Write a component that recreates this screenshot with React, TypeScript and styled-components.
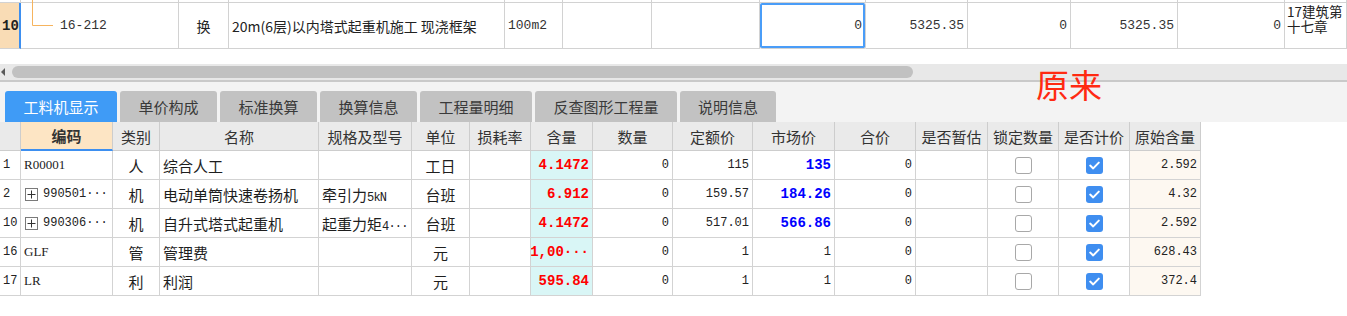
import React from 'react';
import styled, {createGlobalStyle, css} from 'styled-components';

const CJK = '"Noto Sans CJK SC", sans-serif';
const MONO = '"Liberation Mono", "Noto Sans CJK SC", monospace';

const GlobalStyle = createGlobalStyle`
    html, body {
        margin: 0;
        padding: 0;
        background: #fff;
    }
    body {
        font-family: ${CJK};
        color: #222;
    }
`;

const Page = styled.div`
    position: relative;
    width: 1347px;
    height: 316px;
    overflow: hidden;
    background: #fff;
`;

/* ---------- upper grid (quota row) ---------- */

const TopGrid = styled.div`
    display: grid;
    grid-template-columns: 21px 158px 50px 276px 58px 89px 108px 106px 102px 103px 107px 107px 62px;
`;

const StubCell = styled.div`
    height: 3px;
    box-sizing: border-box;
    border-right: 1px solid #d2d2d2;
    border-bottom: 1px solid #d2d2d2;
`;

const TopCell = styled.div<{$align?: 'left' | 'center' | 'right'; $focus?: boolean}>`
    position: relative;
    display: flex;
    align-items: center;
    justify-content: ${p => p.$align === 'right' ? 'flex-end' : p.$align === 'center' ? 'center' : 'flex-start'};
    height: 46px;
    box-sizing: border-box;
    padding: 0 3px;
    border-right: 1px solid #d2d2d2;
    border-bottom: 1px solid #d2d2d2;
    font-size: 14px;
    color: #222;
    white-space: nowrap;
    overflow: hidden;
    ${p => p.$focus && css`
        box-shadow: inset 0 0 0 2px #4a9df8;
        border-radius: 2px;
    `}
`;

const TopRowNo = styled(TopCell)`
    background: #f9dcb5;
    border-right: 2px solid #3d8ff0;
    font-weight: bold;
    font-size: 14px;
    padding: 0 2px;
    font-family: ${MONO};
`;

const TopNote = styled(TopCell)`
    flex-direction: column;
    align-items: flex-start;
    justify-content: flex-start;
    padding: 1px 2px 0;
    font-size: 13.5px;
    line-height: 15px;
`;

const NoteLine = styled.span`
    display: block;
    height: 15px;
`;

const TreeCell = styled(TopCell)`
    padding-left: 39px;
    overflow: visible;
`;

const TreeLine = styled.svg`
    position: absolute;
    left: 10px;
    top: -3px;
`;

const TopNum = styled.span`
    font-family: ${MONO};
    font-size: 13px;
    color: #333;
`;

/* ---------- scrollbar + tabs ---------- */

const ScrollBar = styled.div`
    margin-top: 15px;
    height: 16px;
    background: #e8e8e8;
    border-bottom: 2px solid #c9c9c9;
    display: flex;
    align-items: center;
    padding-left: 1px;
    gap: 7px;
`;

const ScrollArrow = styled.span`
    width: 0;
    height: 0;
    border-top: 4px solid transparent;
    border-bottom: 4px solid transparent;
    border-right: 4px solid #5a5a5a;
`;

const ScrollThumb = styled.span`
    width: 901px;
    height: 12px;
    border-radius: 6px;
    background: #c1c1c1;
`;

const TabStrip = styled.div`
    height: 40px;
    box-sizing: border-box;
    background: #f3f3f3;
    padding: 9px 0 0 5px;
    display: flex;
    align-items: flex-end;
    gap: 3px;
`;

const Tab = styled.div<{$active?: boolean; $w: number}>`
    width: ${p => p.$w}px;
    height: 31px;
    border-radius: 3px 3px 0 0;
    display: flex;
    align-items: center;
    justify-content: center;
    font-size: 15px;
    background: ${p => p.$active ? '#3f9bf6' : '#c2c2c2'};
    color: ${p => p.$active ? '#fff' : '#3a3a3a'};
`;

/* ---------- materials table ---------- */

const Table = styled.div`
    display: grid;
    width: 1201px;
    grid-template-columns: 21px 92px 47px 159px 93px 58px 61px 62px 80px 80px 82px 81px 72px 71px 71px 71px;
`;

const HeadCell = styled.div<{$key?: boolean}>`
    height: 29px;
    box-sizing: border-box;
    display: flex;
    align-items: center;
    justify-content: center;
    background: ${p => p.$key ? '#fde5c4' : '#eaeaea'};
    border-right: 1px solid #cdcdcd;
    border-bottom: ${p => p.$key ? '2px solid #3d8ff0' : '1px solid #cdcdcd'};
    font-size: 15px;
    font-weight: ${p => p.$key ? 'bold' : 'normal'};
    color: #333;
    white-space: nowrap;
    overflow: hidden;
`;

const Cell = styled.div<{$align?: 'left' | 'center' | 'right'; $bg?: string}>`
    height: 29px;
    box-sizing: border-box;
    display: flex;
    align-items: center;
    justify-content: ${p => p.$align === 'right' ? 'flex-end' : p.$align === 'center' ? 'center' : 'flex-start'};
    padding: 0 3px;
    background: ${p => p.$bg ?? '#fff'};
    border-right: 1px solid #d3d3d3;
    border-bottom: 1px solid #d3d3d3;
    font-size: 15px;
    color: #1e1e1e;
    white-space: nowrap;
    overflow: hidden;
`;

const Num = styled.span<{$tone?: 'red' | 'blue'}>`
    font-family: ${MONO};
    font-size: 12px;
    color: #222;
    ${p => p.$tone && css`
        font-size: 14px;
        font-weight: bold;
        color: ${p.$tone === 'red' ? '#ff0000' : '#0000ff'};
    `}
`;

const Spec = styled.span`
    font-size: 15px;
`;

const Tail = styled.span`
    font-family: ${MONO};
    font-size: 12px;
    letter-spacing: -0.8px;
    color: #222;
`;

const Code = styled.span`
    font-family: "Liberation Serif", serif;
    font-size: 13px;
    color: #222;
`;

const Expander = styled.span`
    flex: none;
    width: 13px;
    height: 13px;
    box-sizing: border-box;
    border: 1px solid #7a7a7a;
    margin: 0 5px 0 1px;
    display: inline-flex;
    align-items: center;
    justify-content: center;
`;

const Check = styled.span<{$checked?: boolean}>`
    width: 17px;
    height: 17px;
    box-sizing: border-box;
    border-radius: 3px;
    display: flex;
    align-items: center;
    justify-content: center;
    background: ${p => p.$checked ? '#3f8ef0' : '#fff'};
    border: ${p => p.$checked ? 'none' : '1px solid #a8a8a8'};
`;

const Annotation = styled.div`
    position: absolute;
    left: 1036px;
    top: 68px;
    font-size: 33px;
    line-height: 1;
    color: #ff2a12;
`;

type Row = {
    no: string;
    code: string;
    expand?: boolean;
    type: string;
    name: string;
    spec: string;
    specTail?: string;
    unit: string;
    qty: string;
    quota: string;
    market: string;
    marketTone?: 'blue';
    orig: string;
};

const rows: Row[] = [
    {no: '1', code: 'R00001', type: '人', name: '综合人工', spec: '', unit: '工日', qty: '4.1472', quota: '115', market: '135', marketTone: 'blue', orig: '2.592'},
    {no: '2', code: '990501···', expand: true, type: '机', name: '电动单筒快速卷扬机', spec: '牵引力', specTail: '5kN', unit: '台班', qty: '6.912', quota: '159.57', market: '184.26', marketTone: 'blue', orig: '4.32'},
    {no: '10', code: '990306···', expand: true, type: '机', name: '自升式塔式起重机', spec: '起重力矩', specTail: '4···', unit: '台班', qty: '4.1472', quota: '517.01', market: '566.86', marketTone: 'blue', orig: '2.592'},
    {no: '16', code: 'GLF', type: '管', name: '管理费', spec: '', unit: '元', qty: '1,00···', quota: '1', market: '1', orig: '628.43'},
    {no: '17', code: 'LR', type: '利', name: '利润', spec: '', unit: '元', qty: '595.84', quota: '1', market: '1', orig: '372.4'},
];

const headers = ['', '编码', '类别', '名称', '规格及型号', '单位', '损耗率', '含量', '数量', '定额价', '市场价', '合价', '是否暂估', '锁定数量', '是否计价', '原始含量'];
const tabs: [string, number][] = [
    ['工料机显示', 112], ['单价构成', 97], ['标准换算', 97], ['换算信息', 97],
    ['工程量明细', 112], ['反查图形工程量', 142], ['说明信息', 96],
];

const TickIcon = () => (
    <svg width="11" height="9" viewBox="0 0 11 9">
        <path d="M1.2 4.6 L4.2 7.4 L9.8 1.6" fill="none" stroke="#fff" strokeWidth="2" strokeLinecap="round" strokeLinejoin="round"/>
    </svg>
);

const PlusIcon = () => (
    <svg width="9" height="9" viewBox="0 0 9 9">
        <path d="M4.5 0.5 V8.5 M0.5 4.5 H8.5" stroke="#333" strokeWidth="1"/>
    </svg>
);

const App: React.FC = () => (
    <Page>
        <GlobalStyle/>
        <TopGrid>
            {Array.from({length: 13}).map((_, i) => <StubCell key={i}/>)}
            <TopRowNo>10</TopRowNo>
            <TreeCell>
                <TreeLine width="24" height="29" viewBox="0 0 24 29">
                    <path d="M1.5 0 V25.5 H22" fill="none" stroke="#f6b45e" strokeWidth="1"/>
                </TreeLine>
                <TopNum>16-212</TopNum>
            </TreeCell>
            <TopCell $align="center">换</TopCell>
            <TopCell>20m(6层)以内塔式起重机施工 现浇框架</TopCell>
            <TopCell><TopNum>100m2</TopNum></TopCell>
            <TopCell/>
            <TopCell/>
            <TopCell $align="right" $focus><TopNum>0</TopNum></TopCell>
            <TopCell $align="right"><TopNum>5325.35</TopNum></TopCell>
            <TopCell $align="right"><TopNum>0</TopNum></TopCell>
            <TopCell $align="right"><TopNum>5325.35</TopNum></TopCell>
            <TopCell $align="right"><TopNum>0</TopNum></TopCell>
            <TopNote>
                <NoteLine>17建筑第</NoteLine>
                <NoteLine>十七章</NoteLine>
            </TopNote>
        </TopGrid>

        <ScrollBar>
            <ScrollArrow/>
            <ScrollThumb/>
        </ScrollBar>

        <TabStrip>
            {tabs.map(([label, w], i) => (
                <Tab key={label} $w={w} $active={i === 0}>{label}</Tab>
            ))}
        </TabStrip>

        <Table>
            {headers.map((h, i) => <HeadCell key={i} $key={i === 1}>{h}</HeadCell>)}
            {rows.map(r => (
                <React.Fragment key={r.no}>
                    <Cell><Num>{r.no}</Num></Cell>
                    <Cell>
                        {r.expand && <Expander><PlusIcon/></Expander>}
                        {r.expand ? <Num>{r.code}</Num> : <Code>{r.code}</Code>}
                    </Cell>
                    <Cell $align="center">{r.type}</Cell>
                    <Cell>{r.name}</Cell>
                    <Cell><Spec>{r.spec}{r.specTail && <Tail>{r.specTail}</Tail>}</Spec></Cell>
                    <Cell $align="center">{r.unit}</Cell>
                    <Cell/>
                    <Cell $align="right" $bg="#d9f6f6"><Num $tone="red">{r.qty}</Num></Cell>
                    <Cell $align="right"><Num>0</Num></Cell>
                    <Cell $align="right"><Num>{r.quota}</Num></Cell>
                    <Cell $align="right"><Num $tone={r.marketTone}>{r.market}</Num></Cell>
                    <Cell $align="right"><Num>0</Num></Cell>
                    <Cell/>
                    <Cell $align="center"><Check/></Cell>
                    <Cell $align="center"><Check $checked><TickIcon/></Check></Cell>
                    <Cell $align="right" $bg="#fdf8f1"><Num>{r.orig}</Num></Cell>
                </React.Fragment>
            ))}
        </Table>

        <Annotation>原来</Annotation>
    </Page>
);

export default App;
